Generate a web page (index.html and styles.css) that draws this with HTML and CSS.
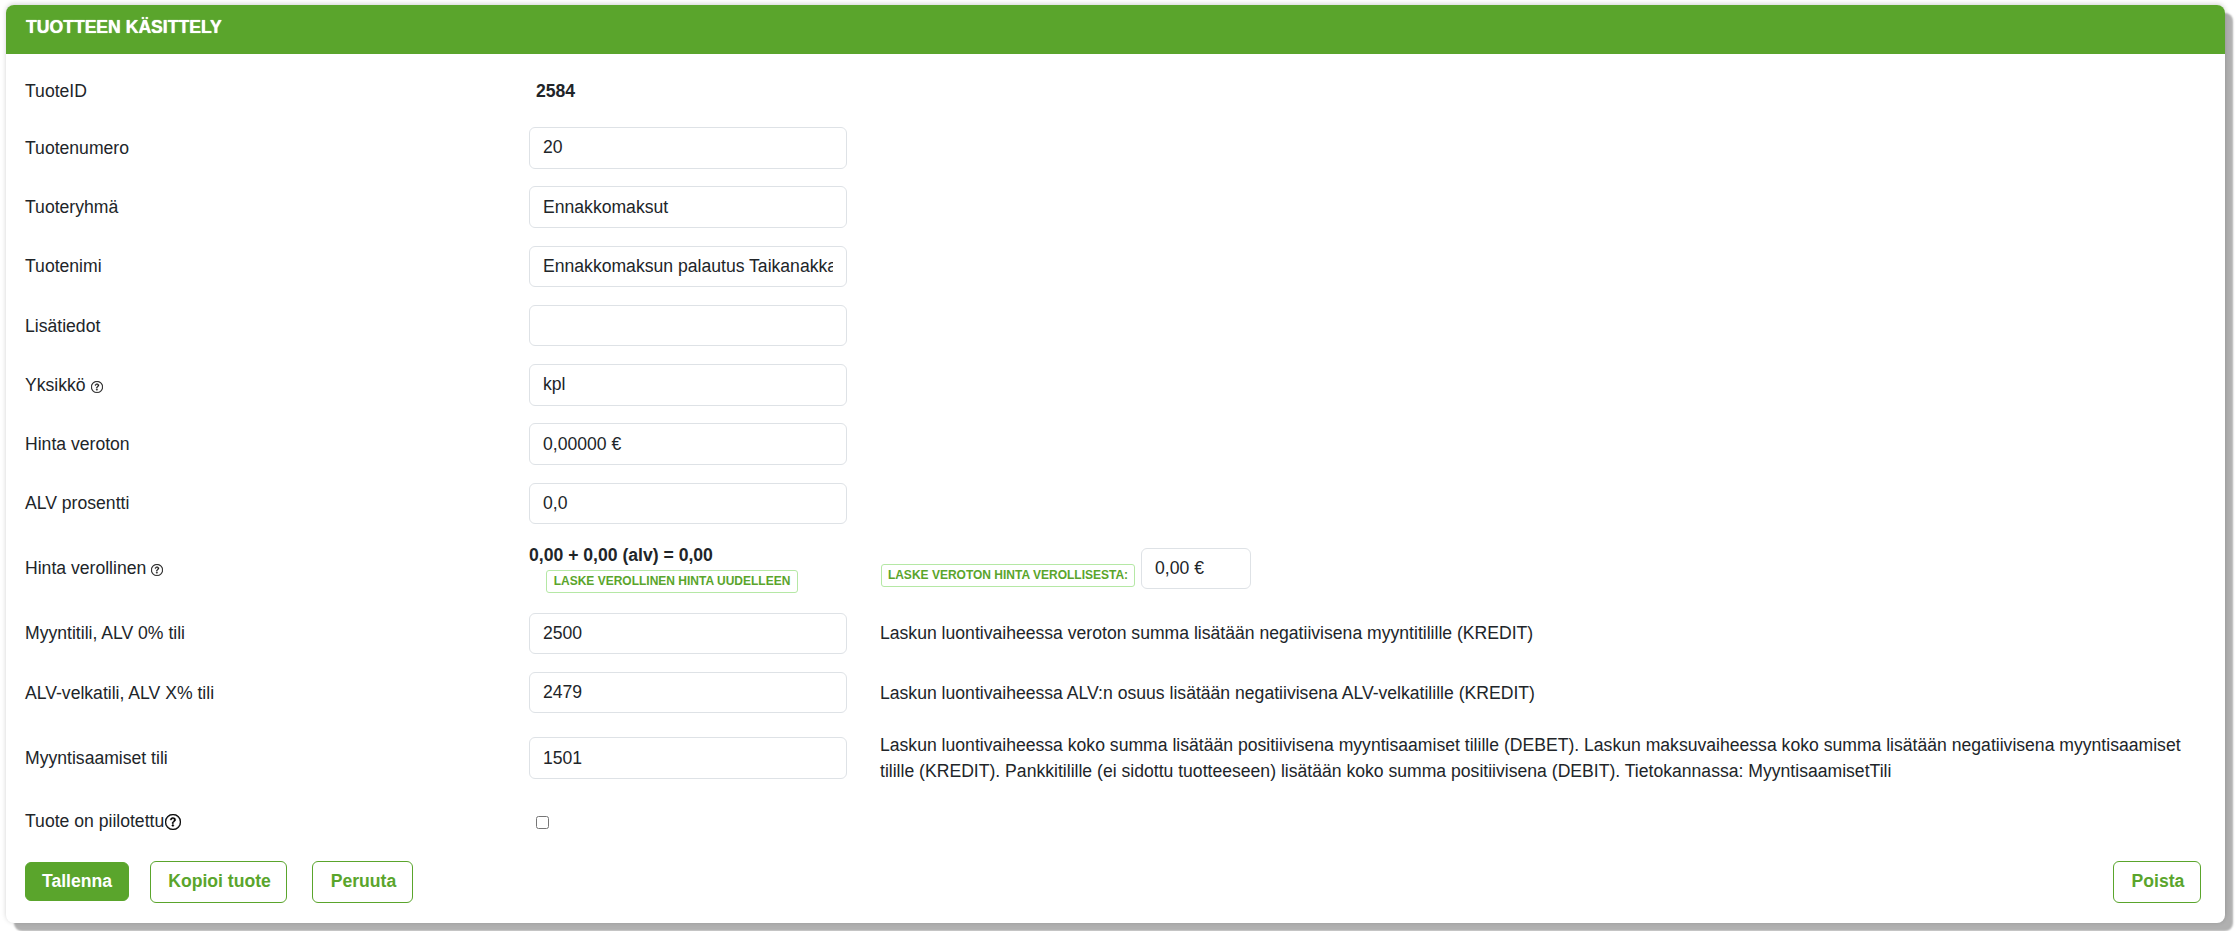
FILE: index.html
```html
<!DOCTYPE html>
<html lang="fi">
<head>
<meta charset="utf-8">
<title>Tuotteen käsittely</title>
<link rel="stylesheet" href="styles.css">
</head>
<body>
<svg class="sprite" width="0" height="0" aria-hidden="true">
  <symbol id="q" viewBox="0 0 16 16">
    <path d="M8 15A7 7 0 1 1 8 1a7 7 0 0 1 0 14zm0 1A8 8 0 1 0 8 0a8 8 0 0 0 0 16z"/>
    <path d="M5.255 5.786a.237.237 0 0 0 .241.247h.825c.138 0 .248-.113.266-.25.09-.656.54-1.134 1.342-1.134.686 0 1.314.343 1.314 1.168 0 .635-.374.927-.965 1.371-.673.489-1.206 1.06-1.168 1.987l.003.217a.25.25 0 0 0 .25.246h.811a.25.25 0 0 0 .25-.25v-.105c0-.718.273-.927 1.01-1.486.609-.463 1.244-.977 1.244-2.056 0-1.511-1.276-2.241-2.673-2.241-1.267 0-2.655.59-2.75 2.286zm1.557 5.763c0 .533.425.927 1.01.927.609 0 1.028-.394 1.028-.927 0-.552-.42-.94-1.029-.94-.584 0-1.009.388-1.009.94z"/>
  </symbol>
</svg>
<main class="card">
  <h1 class="card-title">TUOTTEEN KÄSITTELY</h1>
  <form class="card-body">
    <div class="row row-id">
      <div class="label">TuoteID</div>
      <div class="field"><strong class="id-value">2584</strong></div>
    </div>
    <div class="row">
      <div class="label">Tuotenumero</div>
      <div class="field"><input class="input" value="20"></div>
    </div>
    <div class="row">
      <div class="label">Tuoteryhmä</div>
      <div class="field"><input class="input" value="Ennakkomaksut"></div>
    </div>
    <div class="row">
      <div class="label">Tuotenimi</div>
      <div class="field"><input class="input" value="Ennakkomaksun palautus Taikanakkaan"></div>
    </div>
    <div class="row">
      <div class="label">Lisätiedot</div>
      <div class="field"><input class="input" value=""></div>
    </div>
    <div class="row">
      <div class="label">Yksikkö <svg class="icon-small"><use href="#q"/></svg></div>
      <div class="field"><input class="input" value="kpl"></div>
    </div>
    <div class="row">
      <div class="label">Hinta veroton</div>
      <div class="field"><input class="input" value="0,00000 €"></div>
    </div>
    <div class="row">
      <div class="label">ALV prosentti</div>
      <div class="field"><input class="input" value="0,0"></div>
    </div>
    <div class="row row-price">
      <div class="label">Hinta verollinen <svg class="icon-small"><use href="#q"/></svg></div>
      <div class="field">
        <div class="price-sum">0,00 + 0,00 (alv) = 0,00</div>
        <button type="button" class="btn-mini btn-recalc">LASKE VEROLLINEN HINTA UUDELLEEN</button>
      </div>
      <div class="note reverse">
        <button type="button" class="btn-mini btn-reverse">LASKE VEROTON HINTA VEROLLISESTA:</button>
        <input class="input input-short" value="0,00 €">
      </div>
    </div>
    <div class="row">
      <div class="label">Myyntitili, ALV 0% tili</div>
      <div class="field"><input class="input" value="2500"></div>
      <div class="note">Laskun luontivaiheessa veroton summa lisätään negatiivisena myyntitilille (KREDIT)</div>
    </div>
    <div class="row">
      <div class="label">ALV-velkatili, ALV X% tili</div>
      <div class="field"><input class="input" value="2479"></div>
      <div class="note">Laskun luontivaiheessa ALV:n osuus lisätään negatiivisena ALV-velkatilille (KREDIT)</div>
    </div>
    <div class="row row-long">
      <div class="label">Myyntisaamiset tili</div>
      <div class="field"><input class="input" value="1501"></div>
      <div class="note">Laskun luontivaiheessa koko summa lisätään positiivisena myyntisaamiset tilille (DEBET). Laskun maksuvaiheessa koko summa lisätään negatiivisena myyntisaamiset tilille (KREDIT). Pankkitilille (ei sidottu tuotteeseen) lisätään koko summa positiivisena (DEBIT). Tietokannassa: MyyntisaamisetTili</div>
    </div>
    <div class="row row-check">
      <div class="label">Tuote on piilotettu<svg class="icon-large"><use href="#q"/></svg></div>
      <div class="field"><input class="check" type="checkbox"></div>
    </div>
    <div class="actions">
      <button type="button" class="btn btn-primary">Tallenna</button>
      <button type="button" class="btn btn-copy">Kopioi tuote</button>
      <button type="button" class="btn btn-cancel">Peruuta</button>
      <button type="button" class="btn btn-delete">Poista</button>
    </div>
  </form>
</main>
</body>
</html>
```

FILE: styles.css
```css
* { box-sizing: border-box; }

html, body { height: 100%; }

body {
  margin: 0;
  background: #fff;
  font-family: "Liberation Sans", Arial, sans-serif;
  font-size: 17.6px;
  line-height: 26px;
  color: #212529;
  overflow: hidden;
}

.sprite { position: absolute; }

.card {
  width: 2219px;
  height: 918px;
  margin: 5px 0 0 6px;
  background: #fff;
  border-radius: 8px;
  box-shadow: 0 -1px 5px rgba(0, 0, 0, .18), 8px 8px 2px #b0b0b0;
  overflow: hidden;
}

.card-title {
  margin: 0;
  height: 49px;
  padding: 0 20px;
  background: #5aa52c;
  color: #fff;
  font-size: 17.6px;
  font-weight: 700;
  line-height: 45px;
  text-shadow: 0 0 1px #fff;
}

.card-body {
  padding: 17.5px 24px 0 19px;
}

.row {
  display: flex;
  align-items: center;
  margin-bottom: 17.75px;
}

.row-id { min-height: 37.75px; padding-top: 1.5px; }

.label { width: 504px; flex: none; }

.field { width: 318px; flex: none; }

.note { margin-left: 33px; flex: 1; }

.id-value { padding-left: 7px; }

.input {
  display: block;
  width: 100%;
  height: 41.5px;
  padding: 0 13px;
  border: 1px solid #dee2e6;
  border-radius: 6px;
  background: #fff;
  color: #212529;
  font: inherit;
  outline: none;
}

.input-short { width: 110px; flex: none; }

.icon-small {
  width: 12px;
  height: 12px;
  vertical-align: -2px;
  fill: #111;
  stroke: #111;
  stroke-width: .4;
}

.icon-large {
  width: 16px;
  height: 16px;
  margin-left: 1px;
  vertical-align: -3px;
  fill: #000;
  stroke: #000;
  stroke-width: .4;
}

.price-sum { font-weight: 700; line-height: 26px; }

.btn-mini {
  display: block;
  height: 23px;
  padding: 0;
  border: 1px solid #b5e8a5;
  border-radius: 3px;
  background: #fff;
  color: #5aa52c;
  font-family: inherit;
  font-size: 12px;
  font-weight: 700;
  line-height: 21px;
  white-space: nowrap;
}

.btn-recalc { margin: 2.5px 0 1.5px 17px; width: 252px; }

.reverse { display: flex; gap: 6px; margin-left: 34px; }

.btn-reverse { align-self: flex-end; margin-bottom: 2px; width: 254px; }

.row-long { margin-top: 18.75px; }

.row-check { margin: 24px 0 28px; }

.check { display: block; width: 13px; height: 13px; margin: 3px 0 0 7px; }

.actions { display: flex; align-items: center; margin-top: -1px; }

.btn {
  height: 41.5px;
  padding: 0 0 0 2px;
  border: 1px solid #5aa52c;
  border-radius: 6px;
  background: #fff;
  color: #5aa52c;
  font-family: inherit;
  font-size: 17.6px;
  font-weight: 700;
}

.btn-primary {
  width: 104px;
  height: 39px;
  padding: 0;
  background: #5aa52c;
  color: #fff;
}

.btn-copy { width: 137px; margin-left: 21px; }

.btn-cancel { width: 101px; margin-left: 25px; }

.btn-delete { width: 88px; margin-left: auto; }
```
